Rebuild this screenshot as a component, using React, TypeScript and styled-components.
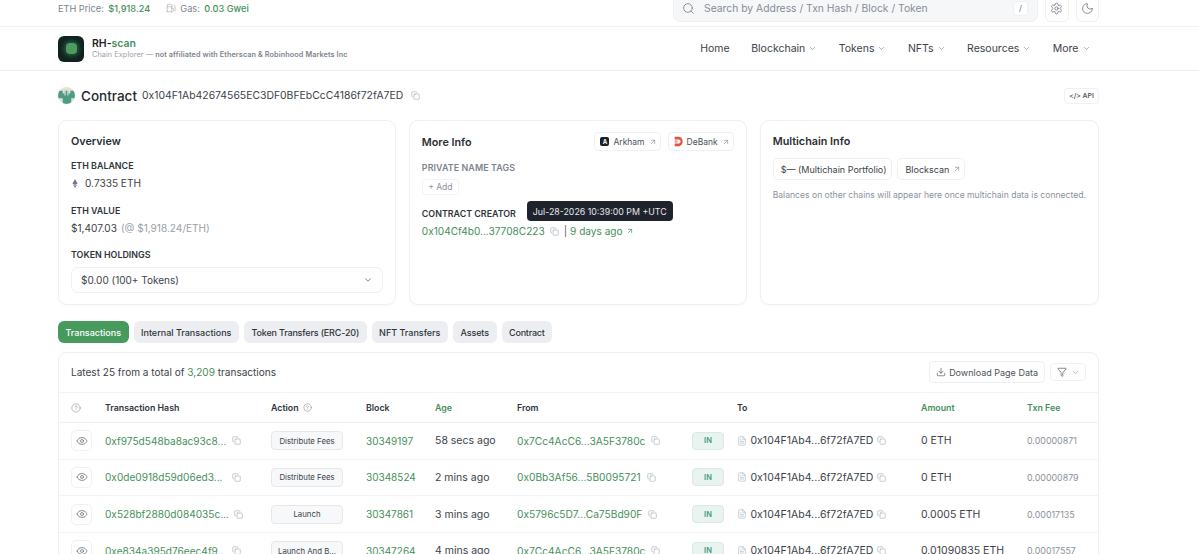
import styled, { createGlobalStyle } from 'styled-components';
import {
  ArrowUpRight,
  ChevronDown,
  CircleHelp,
  Copy,
  Download,
  Eye,
  FileText,
  Filter,
  Fuel,
  Moon,
  Search,
  Settings,
} from 'lucide-react';

const GREEN = '#478f5c';

const rows = [
  { hash: '0xf975d548ba8ac93c8...', action: 'Distribute Fees', block: '30349197', age: '58 secs ago', from: '0x7Cc4AcC6...3A5F3780c', amount: '0 ETH', fee: '0.00000871' },
  { hash: '0x0de0918d59d06ed3...', action: 'Distribute Fees', block: '30348524', age: '2 mins ago', from: '0x0Bb3Af56...5B0095721', amount: '0 ETH', fee: '0.00000879' },
  { hash: '0x528bf2880d084035c...', action: 'Launch', block: '30347861', age: '3 mins ago', from: '0x5796c5D7...Ca75Bd90F', amount: '0.0005 ETH', fee: '0.00017135' },
  { hash: '0xe834a395d76eec4f9...', action: 'Launch And B...', block: '30347264', age: '4 mins ago', from: '0x7Cc4AcC6...3A5F3780c', amount: '0.01090835 ETH', fee: '0.00017557' },
];

const tabs = [
  { label: 'Transactions', spacing: 0 },
  { label: 'Internal Transactions', spacing: 0 },
  { label: 'Token Transfers (ERC-20)', spacing: -0.17 },
  { label: 'NFT Transfers', spacing: 0 },
  { label: 'Assets', spacing: -0.1 },
  { label: 'Contract', spacing: -0.2 },
];
const navItems = ['Blockchain', 'Tokens', 'NFTs', 'Resources', 'More'];

const App = () => {
  return (
    <>
      <GlobalStyle />
      <TopBar>
        <Stats>
          <Muted>ETH Price:</Muted>
          <StatValue>$1,918.24</StatValue>
          <GasIcon size={10} strokeWidth={1.5} />
          <Muted>Gas:</Muted>
          <StatValue>0.03 Gwei</StatValue>
        </Stats>
        <TopActions>
          <SearchBox>
            <Search size={13} strokeWidth={1.6} color="#7d848d" />
            <SearchText>Search by Address / Txn Hash / Block / Token</SearchText>
            <SlashKey>/</SlashKey>
          </SearchBox>
          <SquareButton>
            <Settings size={13} strokeWidth={1.5} />
          </SquareButton>
          <SquareButton>
            <Moon size={13} strokeWidth={1.5} />
          </SquareButton>
        </TopActions>
      </TopBar>

      <Header>
        <Brand>
          <LogoBox>
            <LogoMark />
          </LogoBox>
          <div>
            <BrandName>
              RH-<span>scan</span>
            </BrandName>
            <BrandNote>
              Chain Explorer — <b>not affiliated with Etherscan &amp; Robinhood Markets Inc</b>
            </BrandNote>
          </div>
        </Brand>
        <Nav>
          <NavItem>Home</NavItem>
          {navItems.map((item) => (
            <NavItem key={item}>
              {item}
              <ChevronDown size={9} strokeWidth={1.6} color="#6b7280" />
            </NavItem>
          ))}
        </Nav>
      </Header>

      <Main>
        <TitleRow>
          <Identicon viewBox="0 0 18 18">
            <rect width="18" height="18" fill="#e6e0d5" />
            <path d="M0 4h5v3h2V4h4v3h2V4h5v8h-4v6H5v-6H0z" fill="#4f9c86" />
            <path d="M7 4h1v5H7zM10 4h1v5h-1z" fill="#f3efe8" />
          </Identicon>
          <PageTitle>Contract</PageTitle>
          <Address>0x104F1Ab42674565EC3DF0BFEbCcC4186f72fA7ED</Address>
          <CopyIcon size={9} />
          <ApiButton>&lt;/&gt; API</ApiButton>
        </TitleRow>

        <Cards>
          <Card>
            <CardTitle>Overview</CardTitle>
            <Label>ETH BALANCE</Label>
            <Value>
              <EthGlyph viewBox="0 0 8 12">
                <path d="M4 0 7.4 6 4 8 .6 6z" fill="#6f7590" />
                <path d="M4 9 7 7 4 12 1 7z" fill="#6f7590" />
              </EthGlyph>
              0.7335 ETH
            </Value>
            <Label>ETH VALUE</Label>
            <Value>
              $1,407.03 <Faint>(@ $1,918.24/ETH)</Faint>
            </Value>
            <Label>TOKEN HOLDINGS</Label>
            <TokenSelect>
              $0.00 (100+ Tokens)
              <ChevronDown size={10} strokeWidth={1.6} />
            </TokenSelect>
          </Card>

          <Card>
            <CardHead>
              <CardTitle>More Info</CardTitle>
              <Chips>
                <Chip>
                  <ArkhamMark>A</ArkhamMark>
                  Arkham
                  <ArrowUpRight size={8} color="#8b929b" />
                </Chip>
                <Chip>
                  <svg width="9" height="11" viewBox="0 0 13 13" preserveAspectRatio="none">
                    <path d="M1 1h6a5.5 5.5 0 0 1 0 11H1V9h6a2.5 2.5 0 0 0 0-5H1z" fill="#e8503a" />
                    <path d="M1 5h4v3H1z" fill="#f0a090" />
                  </svg>
                  DeBank
                  <ArrowUpRight size={8} color="#8b929b" />
                </Chip>
              </Chips>
            </CardHead>
            <Label $muted>PRIVATE NAME TAGS</Label>
            <AddTag>+ Add</AddTag>
            <Label>CONTRACT CREATOR</Label>
            <CreatorLine>
              <GreenText>0x104Cf4b0...37708C223</GreenText>
              <CopyIcon size={9} />
              <CreatorAge>
                <Pipe>|</Pipe> 9 days ago
                <ArrowUpRight size={8} />
              </CreatorAge>
            </CreatorLine>
            <Tooltip>Jul-28-2026 10:39:00 PM +UTC</Tooltip>
          </Card>

          <Card>
            <CardTitle>Multichain Info</CardTitle>
            <ChainButtons>
              <ChainButton>$— (Multichain Portfolio)</ChainButton>
              <ChainButton>
                Blockscan
                <ArrowUpRight size={8} color="#8b929b" />
              </ChainButton>
            </ChainButtons>
            <ChainNote>Balances on other chains will appear here once multichain data is connected.</ChainNote>
          </Card>
        </Cards>

        <Tabs>
          {tabs.map((tab, i) => (
            <Tab key={tab.label} $active={i === 0} $spacing={tab.spacing}>
              {tab.label}
            </Tab>
          ))}
        </Tabs>

        <TableCard>
          <TableTop>
            <span>
              Latest 25 from a total of <GreenText>3,209</GreenText> transactions
            </span>
            <TableTools>
              <ToolButton>
                <Download size={10} strokeWidth={1.6} />
                Download Page Data
              </ToolButton>
              <FilterButton>
                <Filter size={10} strokeWidth={1.6} />
                <ChevronDown size={9} strokeWidth={1.6} color="#8b929b" />
              </FilterButton>
            </TableTools>
          </TableTop>

          <HeadRow>
            <CircleHelp size={10} color="#8b929b" strokeWidth={1.5} />
            <span>Transaction Hash</span>
            <ActionHead>
              Action
              <CircleHelp size={9} color="#8b929b" strokeWidth={1.5} />
            </ActionHead>
            <span>Block</span>
            <GreenHead>Age</GreenHead>
            <span>From</span>
            <span />
            <span>To</span>
            <GreenHead>Amount</GreenHead>
            <GreenHead>Txn Fee</GreenHead>
          </HeadRow>

          {rows.map((row) => (
            <BodyRow key={row.hash}>
              <EyeButton>
                <Eye size={12} strokeWidth={1.6} />
              </EyeButton>
              <CopyCell>
                <HashText>{row.hash}</HashText>
                <CopyIcon size={9} />
              </CopyCell>
              <ActionBadge>{row.action}</ActionBadge>
              <BlockText>{row.block}</BlockText>
              <span>{row.age}</span>
              <CopyCell>
                <FromText>{row.from}</FromText>
                <CopyIcon size={9} />
              </CopyCell>
              <InBadge>IN</InBadge>
              <ToCell>
                <FileText size={10} strokeWidth={1.4} color="#a8aeb5" />
                <span>0x104F1Ab4...6f72fA7ED</span>
                <CopyIcon size={9} />
              </ToCell>
              <span>{row.amount}</span>
              <FeeText>{row.fee}</FeeText>
            </BodyRow>
          ))}
        </TableCard>
      </Main>
    </>
  );
};

const GlobalStyle = createGlobalStyle`
  html, body {
    margin: 0;
    height: 100%;
    overflow: hidden;
    background: #fff;
    font-family: Inter, "Liberation Sans", sans-serif;
    color: #24292f;
  }
  * {
    box-sizing: border-box;
  }
`;

const TopBar = styled.div`
  height: 27px;
  padding: 0 100px 0 58px;
  display: flex;
  justify-content: space-between;
  align-items: flex-end;
  border-bottom: 1px solid #f0f1f3;
  overflow: hidden;
`;

const Stats = styled.div`
  display: flex;
  align-items: center;
  gap: 4.5px;
  height: 16px;
  margin-bottom: 10px;
  font-size: 9.2px;
`;

const Muted = styled.span`
  color: #7d848d;
`;

const StatValue = styled.span`
  color: ${GREEN};
  font-weight: 500;
`;

const GasIcon = styled(Fuel)`
  color: #a3a9b1;
  margin-left: 11px;
`;

const TopActions = styled.div`
  display: flex;
  gap: 7px;
  margin-bottom: 4px;
`;

const SearchBox = styled.div`
  width: 365px;
  height: 34px;
  padding: 6px 9px 0 8px;
  display: flex;
  align-items: center;
  gap: 9px;
  background: #f6f7f9;
  border: 1px solid #eef0f2;
  border-radius: 7px;
`;

const SearchText = styled.span`
  flex: 1;
  font-size: 10.35px;
  color: #868d96;
`;

const SlashKey = styled.span`
  width: 15px;
  height: 15px;
  display: flex;
  align-items: center;
  justify-content: center;
  background: #fff;
  border: 1px solid #eef0f2;
  border-radius: 3px;
  font-size: 8px;
  color: #6b7280;
`;

const SquareButton = styled.div`
  width: 23.5px;
  height: 34px;
  padding-top: 6px;
  display: flex;
  align-items: center;
  justify-content: center;
  border: 1px solid #f0f1f3;
  border-radius: 6px;
  color: #6b7280;
`;

const Header = styled.header`
  height: 44px;
  padding: 0 108.5px 0 58px;
  display: flex;
  align-items: center;
  justify-content: space-between;
  border-bottom: 1px solid #f0f1f3;
`;

const Brand = styled.div`
  display: flex;
  align-items: center;
  gap: 8px;
`;

const LogoBox = styled.div`
  width: 26px;
  height: 26px;
  display: flex;
  align-items: center;
  justify-content: center;
  background: #0f2421;
  border-radius: 6px;
`;

const LogoMark = styled.div`
  width: 11px;
  height: 11px;
  background: #4f9a5f;
  border-radius: 4px;
  box-shadow: 0 0 4px 2px rgba(79, 154, 95, 0.45);
`;

const BrandName = styled.div`
  font-size: 10.5px;
  font-weight: 600;
  line-height: 13px;
  color: #1c2126;

  span {
    color: ${GREEN};
  }
`;

const BrandNote = styled.div`
  font-size: 7.25px;
  line-height: 10px;
  letter-spacing: 0.1px;
  color: #9aa0a8;

  b {
    font-weight: 600;
    color: #7d848d;
  }
`;

const Nav = styled.nav`
  display: flex;
  align-items: center;
  gap: 21.5px;
  margin-top: -1px;
`;

const NavItem = styled.div`
  display: flex;
  align-items: center;
  gap: 3px;
  font-size: 10.5px;
  color: #3c4249;
`;

const Main = styled.main`
  padding: 0 100px 0 58px;
`;

const TitleRow = styled.div`
  height: 49px;
  display: flex;
  align-items: center;
`;

const Identicon = styled.svg`
  width: 17px;
  height: 17px;
  border-radius: 50%;
  margin-right: 6px;
`;

const PageTitle = styled.h1`
  margin: 0 5px 0 0;
  font-size: 13.5px;
  font-weight: 500;
  color: #24292f;
`;

const Address = styled.span`
  font-size: 10.4px;
  color: #3c4249;
  margin-right: 8px;
`;

const CopyIcon = styled(Copy)`
  color: #b3b8bf;
  flex-shrink: 0;
`;

const ApiButton = styled.div`
  margin-left: auto;
  width: 35px;
  height: 16px;
  display: flex;
  align-items: center;
  justify-content: center;
  border: 1px solid #eef0f2;
  border-radius: 4px;
  font-size: 6.8px;
  font-weight: 600;
  color: #565d65;
`;

const Cards = styled.div`
  display: grid;
  grid-template-columns: repeat(3, 1fr);
  gap: 13px;
`;

const Card = styled.section`
  position: relative;
  height: 185px;
  padding: 14px 12px 12px;
  background: #fff;
  border: 1px solid #eef0f2;
  border-radius: 9px;
  box-shadow: 0 1px 3px rgba(20, 30, 40, 0.03);
`;

const CardHead = styled.div`
  height: 14px;
  margin: 1px 0 12px;
  display: flex;
  justify-content: space-between;
  align-items: flex-start;
`;

const CardTitle = styled.h2`
  margin: 0;
  font-size: 10.8px;
  line-height: 14px;
  font-weight: 600;
  color: #2a2f35;
`;

const Label = styled.div<{ $muted?: boolean }>`
  margin-top: 11px;
  font-size: 8.9px;
  line-height: 12px;
  font-weight: 600;
  letter-spacing: ${(p) => (p.$muted ? '0.1px' : '0')};
  color: ${(p) => (p.$muted ? '#7d848d' : '#2f353b')};
`;

const Value = styled.div`
  display: flex;
  align-items: center;
  gap: 4px;
  margin: 4px 0 14.5px;
  font-size: 10.1px;
  line-height: 14px;
  color: #3c4249;
`;

const Faint = styled.span`
  color: #9aa0a8;
`;

const EthGlyph = styled.svg`
  width: 6px;
  height: 9px;
  margin: 0 3px 0 1px;
`;

const TokenSelect = styled.div`
  height: 26px;
  margin-top: 6px;
  padding: 0 9px;
  display: flex;
  align-items: center;
  justify-content: space-between;
  border: 1px solid #eef0f2;
  border-radius: 7px;
  font-size: 10px;
  color: #3c4249;
`;

const Chips = styled.div`
  display: flex;
  gap: 7px;
  margin-top: -4px;
`;

const Chip = styled.div`
  height: 19px;
  padding: 0 3px 0 5px;
  display: flex;
  align-items: center;
  gap: 4px;
  border: 1px solid #eef0f2;
  border-radius: 4px;
  font-size: 8.5px;
  color: #4b5259;
`;

const ArkhamMark = styled.span`
  width: 9px;
  height: 9px;
  display: flex;
  align-items: center;
  justify-content: center;
  background: #1c2126;
  border-radius: 2px;
  font-size: 6px;
  font-weight: 700;
  color: #fff;
`;

const AddTag = styled.div`
  width: 37px;
  height: 16px;
  margin: 5px 0 13px;
  display: flex;
  align-items: center;
  justify-content: center;
  border: 1px solid #f3f4f6;
  border-radius: 3px;
  font-size: 8.5px;
  color: #8b929b;
`;

const CreatorLine = styled.div`
  display: flex;
  align-items: center;
  gap: 5px;
  margin-top: 4px;
  font-size: 10.1px;
  line-height: 14px;
`;

const CreatorAge = styled.span`
  display: flex;
  align-items: center;
  gap: 3px;
  color: ${GREEN};
`;

const Pipe = styled.span`
  color: #5b6168;
`;

const GreenText = styled.span`
  color: ${GREEN};
`;

const Tooltip = styled.div`
  position: absolute;
  left: 117px;
  top: 80px;
  height: 20px;
  padding: 0 6px;
  display: flex;
  align-items: center;
  background: #1f232b;
  border-radius: 4px;
  font-size: 8.8px;
  color: #e6e8eb;
  white-space: nowrap;
`;

const ChainButtons = styled.div`
  display: flex;
  gap: 5px;
  margin-top: 9px;
`;

const ChainButton = styled.div`
  height: 22px;
  padding: 0 3px 0 7px;
  display: flex;
  align-items: center;
  gap: 4px;
  border: 1px solid #eef0f2;
  border-radius: 5px;
  font-size: 9px;
  color: #3c4249;

  &:first-child {
    padding-right: 5px;
  }
`;

const ChainNote = styled.p`
  margin: 9px 0 0;
  font-size: 8.6px;
  line-height: 12px;
  color: #8b929b;
  white-space: nowrap;
`;

const Tabs = styled.div`
  display: flex;
  gap: 5px;
  margin-top: 16px;
`;

const Tab = styled.div<{ $active?: boolean; $spacing: number }>`
  height: 22px;
  padding: 0 7.5px;
  display: flex;
  align-items: center;
  background: ${(p) => (p.$active ? '#459a5c' : '#eceef1')};
  border-radius: 6px;
  font-size: 9px;
  font-weight: 500;
  letter-spacing: ${(p) => p.$spacing}px;
  color: ${(p) => (p.$active ? '#fff' : '#2f353b')};
`;

const TableCard = styled.section`
  margin-top: 9px;
  background: #fff;
  border: 1px solid #eef0f2;
  border-radius: 9px;
`;

const TableTop = styled.div`
  height: 40px;
  padding: 0 12px 1px 12px;
  display: flex;
  align-items: center;
  justify-content: space-between;
  border-bottom: 1px solid #f3f4f6;
  font-size: 10.05px;
  color: #3c4249;
`;

const TableTools = styled.div`
  display: flex;
  align-items: center;
  gap: 5px;
`;

const ToolButton = styled.div`
  height: 22px;
  padding: 0 6px;
  display: flex;
  align-items: center;
  gap: 3px;
  border: 1px solid #eef0f2;
  border-radius: 4px;
  font-size: 9px;
  color: #4b5259;
`;

const FilterButton = styled(ToolButton)`
  width: 36px;
  height: 18px;
  padding: 0;
  justify-content: center;
  gap: 4px;
`;

const gridColumns = '34px 166px 95px 69px 82px 175px 45px 184px 106px 1fr';

const HeadRow = styled.div`
  height: 30px;
  padding: 0 12px;
  display: grid;
  grid-template-columns: ${gridColumns};
  align-items: center;
  border-bottom: 1px solid #f0f1f3;
  font-size: 8.8px;
  font-weight: 600;
  color: #2f353b;
`;

const ActionHead = styled.span`
  display: flex;
  align-items: center;
  gap: 4px;
`;

const GreenHead = styled.span`
  color: ${GREEN};
`;

const BodyRow = styled.div`
  height: 36.67px;
  padding: 0 12px;
  display: grid;
  grid-template-columns: ${gridColumns};
  align-items: center;
  border-bottom: 1px solid #f3f4f6;
  font-size: 10.5px;
  color: #3c4249;
  white-space: nowrap;
`;

const EyeButton = styled.div`
  width: 21px;
  height: 21px;
  display: flex;
  align-items: center;
  justify-content: center;
  border: 1px solid #f0f1f3;
  border-radius: 5px;
  color: #6b7280;
`;

const CopyCell = styled.div`
  display: flex;
  align-items: center;
  gap: 6px;
`;

const ToCell = styled(CopyCell)`
  gap: 3.5px;
`;

const HashText = styled(GreenText)`
  min-width: 122px;
  margin-right: -1px;
  font-size: 10.1px;
`;

const BlockText = styled(GreenText)`
  font-size: 10px;
`;

const FromText = styled(GreenText)`
  font-size: 10.2px;
`;

const ActionBadge = styled.div`
  width: 72px;
  height: 19px;
  display: flex;
  align-items: center;
  justify-content: center;
  background: #f7f8fa;
  border: 1px solid #e6e8eb;
  border-radius: 4px;
  font-size: 7.8px;
  color: #3c4249;
`;

const InBadge = styled.div`
  width: 32px;
  height: 18px;
  display: flex;
  align-items: center;
  justify-content: center;
  background: #e9f3f0;
  border: 1px solid #dbe8e4;
  border-radius: 4px;
  font-size: 7.5px;
  font-weight: 600;
  color: #3f9a7d;
`;

const FeeText = styled.span`
  font-size: 8.9px;
  color: #8b929b;
`;

export default App;
